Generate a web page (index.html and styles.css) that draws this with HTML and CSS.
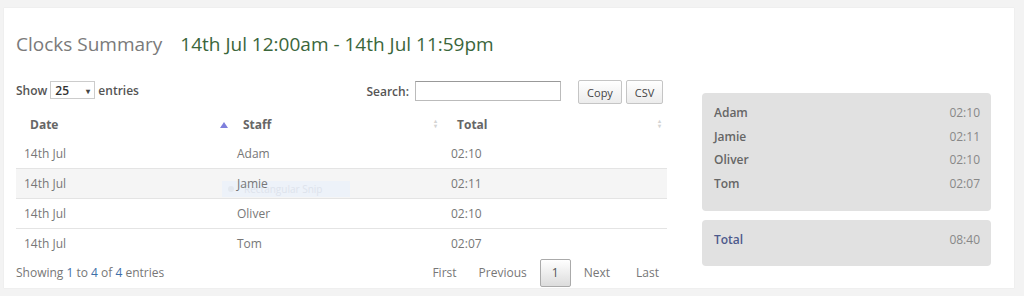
FILE: index.html
```html
<!DOCTYPE html>
<html>
<head>
	<meta charset="utf-8">
	<title>Clocks Summary</title>
	<link rel="stylesheet" href="styles.css">
</head>
<body>
	<div class="panel">
		<h1 class="title">Clocks Summary <span class="range">14th Jul 12:00am - 14th Jul 11:59pm</span></h1>
		<div class="content">
			<div class="report">
				<div class="controls">
					<label class="length">Show
						<span class="select">25 <span class="caret">&#9662;</span></span>
						entries</label>
					<label class="search">Search: <input type="text"></label>
					<div class="tools">
						<button class="tool copy">Copy</button>
						<button class="tool csv">CSV</button>
					</div>
				</div>
				<table class="grid">
					<thead>
						<tr>
							<th class="sort-asc">Date</th>
							<th class="sort-both">Staff</th>
							<th class="sort-both">Total</th>
						</tr>
					</thead>
					<tbody>
						<tr><td>14th Jul</td><td>Adam</td><td>02:10</td></tr>
						<tr class="hover"><td>14th Jul</td><td class="snip-cell"><span class="name">Jamie</span><span class="snip"><i></i>Rectangular Snip</span></td><td>02:11</td></tr>
						<tr><td>14th Jul</td><td>Oliver</td><td>02:10</td></tr>
						<tr><td>14th Jul</td><td>Tom</td><td>02:07</td></tr>
					</tbody>
				</table>
				<div class="footer">
					<div class="info">Showing <b>1</b> to <b>4</b> of <b>4</b> entries</div>
					<div class="paging">
						<a>First</a>
						<a class="prev">Previous</a>
						<a class="current">1</a>
						<a>Next</a>
						<a>Last</a>
					</div>
				</div>
			</div>
			<div class="summary">
				<div class="box">
					<div class="line"><span>Adam</span><em>02:10</em></div>
					<div class="line"><span>Jamie</span><em>02:11</em></div>
					<div class="line"><span>Oliver</span><em>02:10</em></div>
					<div class="line"><span>Tom</span><em>02:07</em></div>
				</div>
				<div class="box total">
					<div class="line"><span>Total</span><em>08:40</em></div>
				</div>
			</div>
		</div>
	</div>
</body>
</html>
```

FILE: styles.css
```css
body {
	margin: 0;
	padding: 8px 10px 8px 4px;
	background: #f3f3f3;
	font-family: "Open Sans", "Liberation Sans", sans-serif;
	font-size: 12px;
	color: #777;
}
.panel {
	background: #fff;
	height: 280px;
	padding: 0 23px 0 12px;
	box-sizing: border-box;
	box-shadow: 0 0 1px #ddd;
}
.title {
	margin: 0;
	padding-top: 22px;
	font-size: 19px;
	line-height: 28px;
	font-weight: normal;
	color: #7a7a7a;
}
.range {
	margin-left: 13px;
	color: #3b663b;
}
.content {
	display: flex;
	gap: 35px;
	margin-top: 22px;
}
.report {
	width: 651px;
}

.controls {
	display: flex;
	align-items: flex-start;
	height: 30px;
	font-weight: 600;
	color: #555;
}
.length {
	display: flex;
	align-items: center;
	gap: 3px;
	margin-top: 1px;
}
.select {
	display: inline-flex;
	justify-content: space-between;
	align-items: center;
	width: 45px;
	height: 18px;
	box-sizing: border-box;
	padding: 0 4px;
	border: 1px solid #ccc;
	color: #333;
	font-weight: 600;
}
.caret {
	font-size: 8px;
	color: #444;
}
.search {
	display: flex;
	align-items: center;
	gap: 6px;
	margin-left: auto;
	margin-top: 1px;
}
.search input {
	width: 146px;
	height: 20px;
	box-sizing: border-box;
	border: 1px solid #bbb;
	border-top-color: #999;
	font: inherit;
}
.tools {
	display: flex;
	gap: 4px;
	margin-left: 17px;
	margin-right: 4px;
}
.tool {
	height: 24px;
	padding: 0;
	border: 1px solid #c5c5c5;
	border-radius: 2px;
	background: linear-gradient(#fff, #ececec);
	font: 11px "Open Sans", "Liberation Sans", sans-serif;
	color: #444;
}
.copy {
	width: 44px;
}
.csv {
	width: 37px;
}

.grid {
	width: 100%;
	border-collapse: collapse;
}
.grid th {
	height: 29px;
	padding: 0 14px;
	text-align: left;
	font-size: 12px;
	font-weight: 700;
	color: #666;
	position: relative;
}
.grid th:first-child {
	width: 185px;
}
.grid th:nth-child(2) {
	width: 186px;
}
.sort-asc::after {
	content: "";
	position: absolute;
	right: 1px;
	top: 8px;
	border: 4px solid transparent;
	border-bottom: 6px solid #7e7fdc;
}
.sort-both::after {
	content: "\25B4\A\25BE";
	white-space: pre;
	position: absolute;
	right: 6px;
	top: 9px;
	font-size: 6px;
	line-height: 5px;
	color: #d4d4d4;
}
.grid td {
	height: 29px;
	padding: 0 8px;
	color: #777;
	border-top: 1px solid #e4e4e4;
}
.grid tbody tr:first-child td {
	border-top: none;
}
.grid tr.hover td {
	background: #f5f5f5;
}
.snip-cell {
	position: relative;
}
.name {
	position: relative;
	z-index: 1;
}
.snip {
	position: absolute;
	left: -7px;
	top: 12px;
	width: 128px;
	height: 16px;
	background: #edf2f9;
	color: #dde3ec;
	font-size: 10px;
	line-height: 16px;
	padding-left: 22px;
	box-sizing: border-box;
	z-index: 0;
}
.snip i {
	position: absolute;
	left: 6px;
	top: 5px;
	width: 6px;
	height: 6px;
	border-radius: 50%;
	background: #e3e8ef;
}

.footer {
	display: flex;
	align-items: center;
	height: 32px;
	margin-top: -2px;
}
.info b {
	font-weight: normal;
	color: #3e6fa8;
}
.paging {
	display: flex;
	align-items: center;
	margin-left: auto;
	margin-right: -5px;
	margin-top: 2px;
	color: #777;
}
.paging a {
	padding: 5px 13px;
	font-size: 12px;
	line-height: 16px;
}
.paging a.prev {
	padding-left: 9px;
}
.paging a.current {
	width: 29px;
	padding: 5px 0;
	text-align: center;
	border: 1px solid #aaa;
	border-radius: 2px;
	background: linear-gradient(#fff, #dcdcdc);
	color: #555;
}

.summary {
	width: 289px;
	display: flex;
	flex-direction: column;
	gap: 9px;
	margin-top: 13px;
}
.box {
	background: #e1e1e1;
	border-radius: 4px;
	padding: 11px 11px 16px 12px;
	height: 118px;
	box-sizing: border-box;
}
.box.total {
	height: 46px;
	padding-top: 11px;
}
.line {
	display: flex;
	justify-content: space-between;
	height: 23.5px;
	line-height: 18px;
}
.line span {
	font-weight: 600;
	color: #666;
}
.line em {
	font-style: normal;
	color: #888;
}
.total .line span {
	color: #4d5a8c;
}
```
